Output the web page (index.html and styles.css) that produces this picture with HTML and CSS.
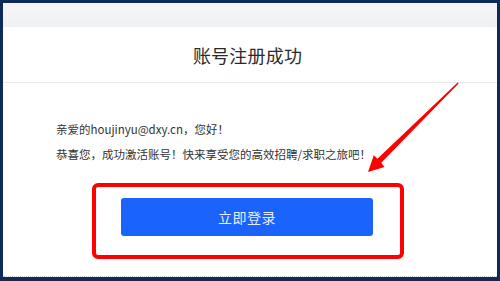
FILE: index.html
```html
<!DOCTYPE html>
<html lang="zh">
<head>
<meta charset="utf-8">
<title>账号注册成功</title>
<link rel="stylesheet" href="styles.css">
</head>
<body>
<div class="frame">
  <div class="topbar"></div>
  <div class="header"><h1 class="title">账号注册成功</h1></div>
  <div class="content">
    <p class="line">亲爱的houjinyu@dxy.cn，您好！</p>
    <p class="line">恭喜您，成功激活账号！快来享受您的高效招聘/求职之旅吧！</p>
    <button class="login">立即登录</button>
  </div>
  <svg class="annot" width="500" height="281" viewBox="0 0 500 281" xmlns="http://www.w3.org/2000/svg">
    <rect x="94" y="185" width="308" height="72" rx="4" ry="4" fill="none" stroke="#ff0000" stroke-width="4"/>
    <polygon fill="#ff0000" points="368,172 384.5,167 381.3,162.8 458.6,83.4 457.6,82.6 377.4,158.8 373.8,155.2"/>
  </svg>
</div>
</body>
</html>
```
FILE: styles.css
```css
html, body {
  margin: 0;
  padding: 0;
}
body {
  background: #0d2a58;
  width: 500px;
  height: 281px;
  overflow: hidden;
  font-family: "Noto Sans CJK SC", "Noto Sans", sans-serif;
  position: relative;
}
.frame {
  margin: 3px 3px 0 3px;
  height: 273px;
  background: #ffffff;
  border-bottom: 1px dotted #c8c8c8;
  display: flex;
  flex-direction: column;
}
.topbar {
  height: 24px;
  background: linear-gradient(#f6f6f6, #eef1f4);
}
.header {
  height: 55px;
  border-bottom: 1px solid #e9e9e9;
  display: flex;
  align-items: center;
  justify-content: center;
  padding-right: 5px;
}
.title {
  margin: 0;
  font-size: 18px;
  font-weight: normal;
  color: #2b2b2b;
  letter-spacing: 0.2px;
}
.content {
  padding: 34px 0 0 53px;
  display: flex;
  flex-direction: column;
  align-items: flex-start;
}
.line {
  margin: 0;
  font-size: 11.5px;
  line-height: 25px;
  color: #333333;
}
.login {
  margin: 31px 0 0 65px;
  width: 252px;
  height: 38px;
  border: none;
  border-radius: 3px;
  background: #1a64fd;
  color: #e6eeff;
  font-family: "Noto Sans CJK SC", "Noto Sans", sans-serif;
  font-size: 14px;
  letter-spacing: 0.5px;
  padding: 0;
}
.annot {
  position: absolute;
  left: 0;
  top: 0;
}
```
